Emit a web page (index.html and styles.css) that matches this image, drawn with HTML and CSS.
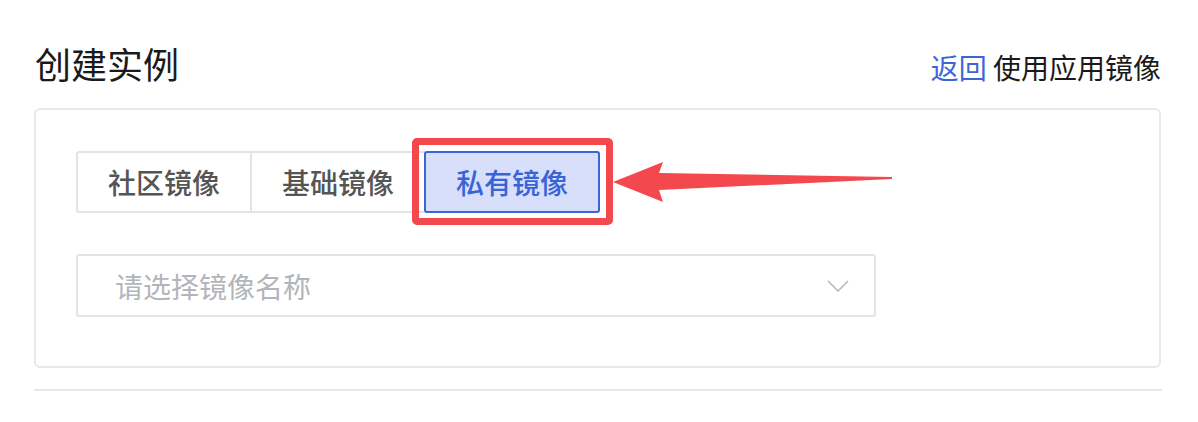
FILE: index.html
```html
<!DOCTYPE html>
<html lang="zh-CN">
<head>
<meta charset="utf-8">
<title>创建实例</title>
<link rel="stylesheet" href="styles.css">
</head>
<body>
<div class="page">
  <header class="head">
    <h1 class="title">创建实例</h1>
    <div class="links"><a class="back" href="#">返回</a> 使用应用镜像</div>
  </header>
  <section class="card">
    <div class="tabs">
      <button class="tab">社区镜像</button>
      <button class="tab">基础镜像</button>
      <button class="tab active">私有镜像<span class="highlight"></span></button>
    </div>
    <svg class="arrow" width="290" height="55" viewBox="0 0 290 55">
      <polygon points="3,27 53,7 49,18 282,22 282,24 49,35 53,47" fill="#f4484f"/>
    </svg>
    <div class="select">
      <span class="placeholder">请选择镜像名称</span>
      <svg class="chev" width="22" height="12" viewBox="0 0 22 12">
        <polyline points="1,1 11,11 21,1" fill="none" stroke="#b4b7bc" stroke-width="1.5"/>
      </svg>
    </div>
  </section>
  <hr class="sep">
</div>
</body>
</html>
```
FILE: styles.css
```css
* { box-sizing: border-box; }
html, body { margin: 0; padding: 0; background: #fff; }
body {
  font-family: "Noto Sans CJK SC", "Noto Sans", sans-serif;
  color: #1b1b1b;
}
.page {
  padding: 45px 36px 0 34px;
}
.head {
  display: flex;
  justify-content: space-between;
  align-items: baseline;
  padding-left: 1px;
}
.title {
  margin: 0;
  font-size: 36px;
  line-height: 36px;
  font-weight: 400;
  color: #1a1a1a;
}
.links {
  font-size: 28px;
  line-height: 28px;
  color: #1a1a1a;
  padding-right: 1px;
}
.back {
  color: #3c66d6;
  text-decoration: none;
}
.card {
  position: relative;
  margin-top: 27px;
  width: 1127px;
  border: 2px solid #e6e8eb;
  border-radius: 6px;
  padding: 41px 40px 49px 40px;
}
.tabs {
  display: flex;
}
.tab {
  position: relative;
  font-family: inherit;
  font-size: 28px;
  font-weight: 500;
  line-height: 58px;
  height: 62px;
  padding: 0 30px;
  color: #555555;
  background: #fff;
  border: 2px solid #e0e3e7;
  margin: 0 0 0 -2px;
  border-radius: 0;
  cursor: pointer;
}
.tab:first-child {
  margin-left: 0;
  border-radius: 3px 0 0 3px;
}
.tab.active {
  z-index: 1;
  color: #3a63d6;
  background: #d7dffb;
  border-color: #3b64d9;
  border-radius: 3px;
}
.highlight {
  position: absolute;
  left: -14px;
  top: -15px;
  right: -15px;
  bottom: -14px;
  border: 7px solid #f4484f;
  border-radius: 5px;
  pointer-events: none;
}
.arrow {
  position: absolute;
  left: 574px;
  top: 45px;
}
.select {
  margin-top: 41px;
  width: 800px;
  height: 63px;
  border: 2px solid #e0e3e7;
  border-radius: 3px;
  display: flex;
  align-items: center;
  justify-content: space-between;
  padding: 0 25px 0 37px;
}
.placeholder {
  font-size: 28px;
  color: #b2b5ba;
}
.chev {
  display: block;
}
.sep {
  margin: 21px 0 0 0;
  width: 1128px;
  border: none;
  border-top: 2px solid #e6e8eb;
  height: 0;
}
```
